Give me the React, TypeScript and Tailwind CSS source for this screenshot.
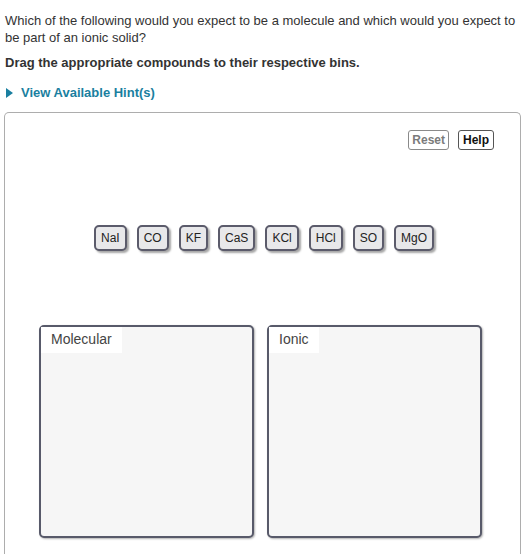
const compounds = ["NaI", "CO", "KF", "CaS", "KCl", "HCl", "SO", "MgO"];

function Chip({ label }: { label: string }) {
  return (
    <div className="h-[26px] px-[5px] flex items-center rounded-[5px] border-2 border-[#5b5b6b] bg-[#e8e8ea] text-[12px] text-[#222] shadow-[2px_2px_2px_rgba(0,0,0,0.35)]">
      {label}
    </div>
  );
}

function Bin({ title }: { title: string }) {
  return (
    <div className="w-[215px] h-[213px] rounded-[5px] border-2 border-[#585a6a] bg-[#f6f6f6] shadow-[1px_1px_2px_rgba(0,0,0,0.3)]">
      <div className="inline-block bg-white px-[10px] pt-[2px] pb-[3px] text-[14px] text-[#444]">{title}</div>
    </div>
  );
}

export default function App() {
  return (
    <div className="w-[525px] h-[554px] overflow-hidden bg-white font-['Liberation_Sans',Arial,sans-serif] text-[#333]">
      <div className="pl-[5px] pr-[6px] pt-[12px] text-[13px] leading-[17px]">
        Which of the following would you expect to be a molecule and which would you expect to be part of an ionic solid?
      </div>
      <div className="pl-[5px] mt-[8px] text-[13px] font-bold leading-[17px]">
        Drag the appropriate compounds to their respective bins.
      </div>
      <div className="pl-[5px] mt-[13px] flex items-center gap-[8px] text-[13px] font-bold text-[#1a7fa0] leading-[17px]">
        <svg width="7" height="10" viewBox="0 0 7 10" className="ml-[1px]">
          <path d="M0 0 L7 5 L0 10 Z" fill="#1a7fa0" />
        </svg>
        View Available Hint(s)
      </div>

      {/* drag and drop area */}
      <div className="ml-[4px] mt-[11px] w-[517px] h-[460px] rounded-t-[5px] border border-[#adadad] border-b-0">
        <div className="flex justify-end gap-[9px] pr-[26px] pt-[17px]">
          <button className="h-[20px] px-[3px] rounded-[3px] border border-[#8a8a8a] text-[12px] font-bold text-[#7b7b7b] leading-none">
            Reset
          </button>
          <button className="h-[20px] px-[4px] rounded-[3px] border border-[#555] text-[12px] font-bold text-[#111] leading-none">
            Help
          </button>
        </div>
        <div className="flex gap-[10px] mt-[75px] ml-[89px]">
          {compounds.map((c) => (
            <Chip key={c} label={c} />
          ))}
        </div>
        <div className="flex gap-[13px] ml-[34px] mt-[74px]">
          <Bin title="Molecular" />
          <Bin title="Ionic" />
        </div>
      </div>
    </div>
  );
}
